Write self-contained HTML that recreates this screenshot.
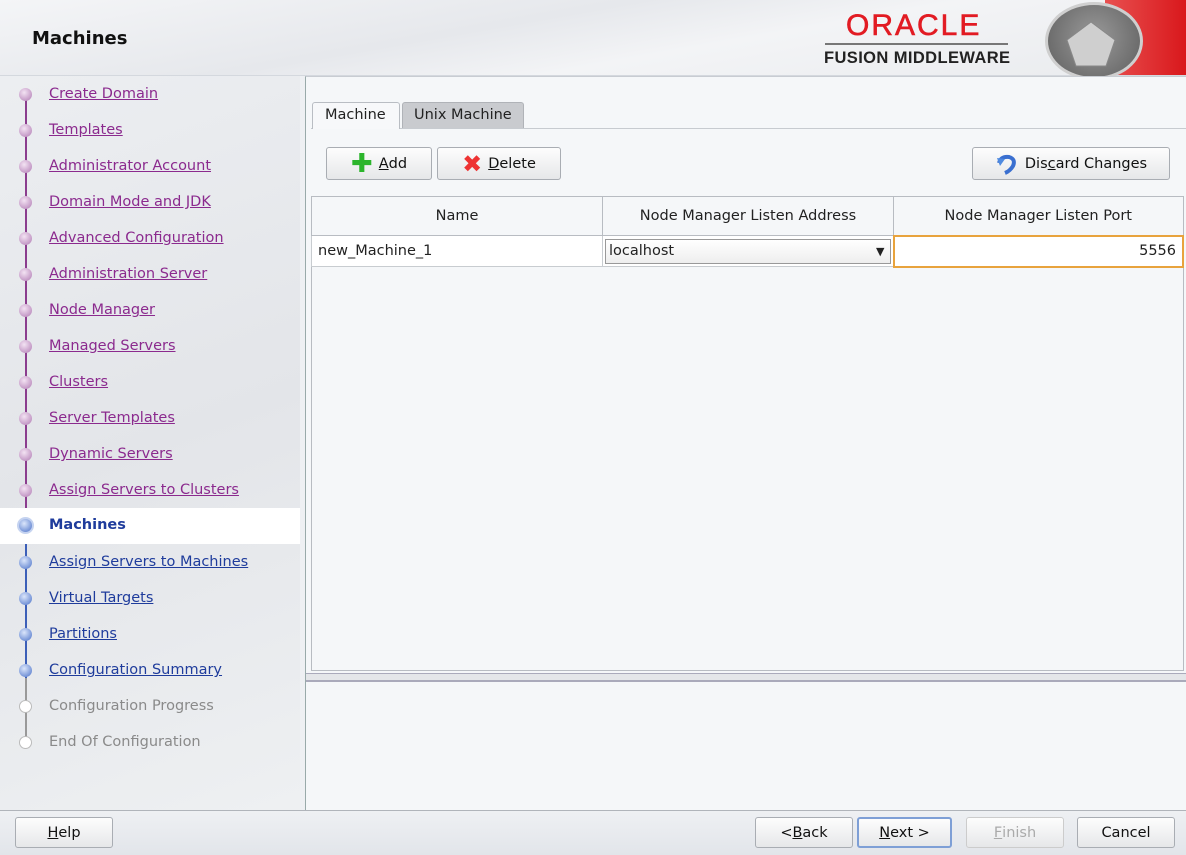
<!DOCTYPE html>
<html><head><meta charset="utf-8"><style>
*{box-sizing:border-box;margin:0;padding:0}
body{width:1186px;height:855px;overflow:hidden;font-family:"DejaVu Sans","Liberation Sans",sans-serif;font-size:14px;background:#eef0f3;position:relative;color:#222}
.abs{position:absolute}
#hdr{left:0;top:0;width:1186px;height:76px;background:linear-gradient(170deg,#f4f5f7 0%,#e6e8ec 40%,#f3f4f6 60%,#e9ebee 100%);border-bottom:1px solid #d4d8de}
#left{left:0;top:76px;width:300px;height:734px;background:linear-gradient(160deg,#eceef1,#e3e5e9 50%,#eef0f2)}
.nav{position:absolute;left:49px;font-size:14.5px;text-decoration:underline;white-space:nowrap}
.p{color:#8b2a8e}.b{color:#1f3c9c}.g{color:#8a8a8a;text-decoration:none}
.dot{position:absolute;left:19px;width:13px;height:13px;border-radius:50%}
.dp{background:radial-gradient(circle at 40% 35%,#f3e3f3,#b07ab3)}
.db{background:radial-gradient(circle at 40% 35%,#dbe6fb,#4a71c8)}
.dg{background:#fff;border:1px solid #bbb}
#right{left:305px;top:76px;width:881px;height:734px;background:#f5f7f9;border-left:1px solid #9aa;border-top:1px solid #c8ccd2}
.btn{position:absolute;border:1px solid #a9adb3;border-radius:3px;background:linear-gradient(#fdfdfd,#e6e7e9);font-size:14.5px;display:flex;align-items:center;justify-content:center;color:#111}
table{border-collapse:collapse}
</style></head><body>
<div id="hdr" class="abs">
 <div class="abs" style="left:32px;top:28px;font-weight:bold;font-size:18px;color:#111">Machines</div>
 <div class="abs" style="left:846px;top:9px;font-size:30px;color:#e21b23;font-family:'Liberation Sans',sans-serif;letter-spacing:2px;-webkit-text-stroke:0.6px #e21b23">ORACLE</div>
 <div class="abs" style="left:825px;top:43px;width:183px;height:2px;background:#777"></div>
 <div class="abs" style="left:824px;top:49px;font-size:16.5px;font-weight:bold;font-family:'Liberation Sans',sans-serif;color:#222;letter-spacing:0.4px">FUSION MIDDLEWARE</div>
 <div class="abs" style="left:1105px;top:0;width:81px;height:75px;background:linear-gradient(90deg,#e85050,#d9181c)"></div>
 <div class="abs" style="left:1045px;top:2px;width:98px;height:78px;border-radius:50%;background:radial-gradient(circle at 50% 45%,#9a9a9a,#5e5e5e);border:3px solid #cfcfcf"></div>
 <svg class="abs" style="left:1063px;top:18px" width="56" height="52"><polygon points="28,4 52,22 43,48 13,48 4,22" fill="#cfcfcf" stroke="#888"/></svg>
</div>
<div id="left" class="abs"></div>
<div class="abs" style="left:25px;top:100px;width:2px;height:414px;background:#8b3d8e"></div>
<div class="abs" style="left:25px;top:530px;width:2px;height:148px;background:#3c5fb8"></div>
<div class="abs" style="left:25px;top:678px;width:2px;height:64px;background:#999"></div>
<div class="abs" style="left:0;top:508px;width:300px;height:36px;background:#fff"></div>
<div class="dot dp" style="top:88px"></div><div class="nav p" style="top:86px">Create Domain</div>
<div class="dot dp" style="top:124px"></div><div class="nav p" style="top:122px">Templates</div>
<div class="dot dp" style="top:160px"></div><div class="nav p" style="top:158px">Administrator Account</div>
<div class="dot dp" style="top:196px"></div><div class="nav p" style="top:194px">Domain Mode and JDK</div>
<div class="dot dp" style="top:232px"></div><div class="nav p" style="top:230px">Advanced Configuration</div>
<div class="dot dp" style="top:268px"></div><div class="nav p" style="top:266px">Administration Server</div>
<div class="dot dp" style="top:304px"></div><div class="nav p" style="top:302px">Node Manager</div>
<div class="dot dp" style="top:340px"></div><div class="nav p" style="top:338px">Managed Servers</div>
<div class="dot dp" style="top:376px"></div><div class="nav p" style="top:374px">Clusters</div>
<div class="dot dp" style="top:412px"></div><div class="nav p" style="top:410px">Server Templates</div>
<div class="dot dp" style="top:448px"></div><div class="nav p" style="top:446px">Dynamic Servers</div>
<div class="dot dp" style="top:484px"></div><div class="nav p" style="top:482px">Assign Servers to Clusters</div>
<div class="dot db" style="top:517px;left:17px;width:17px;height:17px;border:2px solid #c5d3f0"></div><div class="nav b" style="top:517px;font-weight:bold;text-decoration:none">Machines</div>
<div class="dot db" style="top:556px"></div><div class="nav b" style="top:554px">Assign Servers to Machines</div>
<div class="dot db" style="top:592px"></div><div class="nav b" style="top:590px">Virtual Targets</div>
<div class="dot db" style="top:628px"></div><div class="nav b" style="top:626px">Partitions</div>
<div class="dot db" style="top:664px"></div><div class="nav b" style="top:662px">Configuration Summary</div>
<div class="dot dg" style="top:700px"></div><div class="nav g" style="top:698px">Configuration Progress</div>
<div class="dot dg" style="top:736px"></div><div class="nav g" style="top:734px">End Of Configuration</div>

<div id="right" class="abs"></div>
<div class="abs" style="left:311px;top:128px;width:875px;height:1px;background:#c7cbd0"></div>
<div class="abs" style="left:312px;top:102px;width:88px;height:27px;background:#f7f8fa;border:1px solid #b9bdc3;border-bottom:none;border-radius:3px 3px 0 0;font-size:14.5px;padding:4px 0 0 12px">Machine</div>
<div class="abs" style="left:402px;top:102px;width:122px;height:26px;background:#c9cbcf;border:1px solid #b0b3b8;border-bottom:none;border-radius:3px 3px 0 0;font-size:14.5px;padding:4px 0 0 11px;color:#222">Unix Machine</div>
<div class="btn" style="left:326px;top:147px;width:106px;height:33px"><span style="color:#2cb52c;font-size:26px;font-weight:bold;margin-right:6px;line-height:1">✚</span><u>A</u>dd</div>
<div class="btn" style="left:437px;top:147px;width:124px;height:33px"><span style="color:#e33;font-size:24px;font-weight:bold;margin-right:6px;line-height:1">✖</span><u>D</u>elete</div>
<div class="btn" style="left:972px;top:147px;width:198px;height:33px"><svg width="24" height="22" style="margin-right:6px"><path d="M4 10 Q6 3 14 4 Q21 6 18 13 Q15 18 10 20" fill="none" stroke="#3a6fd0" stroke-width="4"/><path d="M2 5 L10 6 L5 13Z" fill="#4f8ae0"/></svg>Dis<u>c</u>ard Changes</div>
<div class="abs" style="left:311px;top:196px;width:873px;height:475px;background:#f5f7f9;border:1px solid #b8bcc2"></div>
<table class="abs" style="left:311px;top:196px;width:873px;font-size:14.5px">
<tr style="height:39px;background:#f5f7f9"><td style="width:291px;border:1px solid #b8bcc2;text-align:center">Name</td><td style="width:291px;border:1px solid #b8bcc2;text-align:center">Node Manager Listen Address</td><td style="border:1px solid #b8bcc2;text-align:center">Node Manager Listen Port</td></tr>
<tr style="height:31px;background:#fff"><td style="border:1px solid #c8ccd0;padding-left:6px">new_Machine_1</td><td style="border:1px solid #c8ccd0;padding:2px"><div style="border:1px solid #999;height:25px;background:linear-gradient(#fff,#eee);padding-left:3px;display:flex;align-items:center;justify-content:space-between">localhost<span style="font-size:11px;margin-right:5px">▼</span></div></td><td style="border:2px solid #e8a33d;text-align:right;padding-right:6px">5556</td></tr>
</table>
<div class="abs" style="left:306px;top:673px;width:880px;height:9px;background:#e4e6e9;border-top:1px solid #aab;border-bottom:2px solid #aab"></div>
<div class="abs" style="left:0;top:810px;width:1186px;height:45px;background:linear-gradient(#eef0f3,#e2e5ea);border-top:1px solid #b0b4ba"></div>
<div class="btn" style="left:15px;top:817px;width:98px;height:31px"><u>H</u>elp</div>
<div class="btn" style="left:755px;top:817px;width:98px;height:31px">&lt; <u>B</u>ack</div>
<div class="btn" style="left:857px;top:817px;width:95px;height:31px;border:2px solid #7e9fd6"><u>N</u>ext &gt;</div>
<div class="btn" style="left:966px;top:817px;width:98px;height:31px;color:#aaa;border-color:#ccc"><u>F</u>inish</div>
<div class="btn" style="left:1077px;top:817px;width:98px;height:31px">Cancel</div>
</body></html>
